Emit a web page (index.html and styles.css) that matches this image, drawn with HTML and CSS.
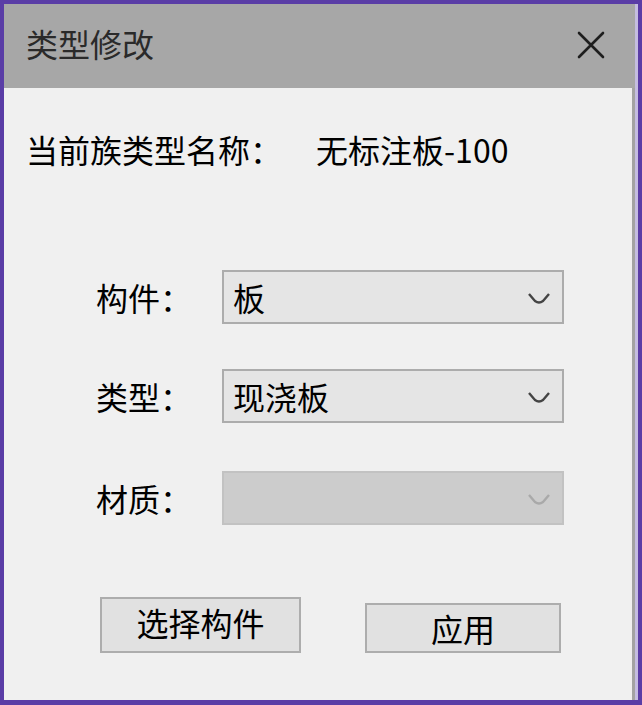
FILE: index.html
```html
<!DOCTYPE html>
<html lang="zh-CN">
<head>
<meta charset="utf-8">
<title>类型修改</title>
<link rel="stylesheet" href="styles.css">
</head>
<body>
<div class="window">
  <div class="titlebar">
    <span class="title">类型修改</span>
    <span class="close" aria-label="关闭">
      <svg width="28" height="28" viewBox="0 0 28 28"><path d="M2 2 L26 26 M26 2 L2 26" stroke="#1e1e1e" stroke-width="2.6" stroke-linecap="round" fill="none"/></svg>
    </span>
  </div>
  <div class="content">
    <div class="info">
      <span class="info-label">当前族类型名称：</span>
      <span class="info-value">无标注板-100</span>
    </div>
    <div class="form-row row-1">
      <span class="label">构件：</span>
      <div class="combo">
        <span class="combo-text">板</span>
        <svg class="chev" width="24" height="14" viewBox="0 0 24 14"><path d="M2 3 L8 10 Q12 13 16 10 L22 3" stroke="#444" stroke-width="2.4" fill="none" stroke-linejoin="round"/></svg>
      </div>
    </div>
    <div class="form-row row-2">
      <span class="label">类型：</span>
      <div class="combo">
        <span class="combo-text">现浇板</span>
        <svg class="chev" width="24" height="14" viewBox="0 0 24 14"><path d="M2 3 L8 10 Q12 13 16 10 L22 3" stroke="#444" stroke-width="2.4" fill="none" stroke-linejoin="round"/></svg>
      </div>
    </div>
    <div class="form-row row-3">
      <span class="label">材质：</span>
      <div class="combo disabled">
        <span class="combo-text"></span>
        <svg class="chev" width="24" height="14" viewBox="0 0 24 14"><path d="M2 3 L8 10 Q12 13 16 10 L22 3" stroke="#a9a9a9" stroke-width="2.4" fill="none" stroke-linejoin="round"/></svg>
      </div>
    </div>
    <div class="buttons">
      <button class="btn btn-select">选择构件</button>
      <button class="btn btn-apply">应用</button>
    </div>
  </div>
</div>
</body>
</html>
```

FILE: styles.css
```css
html, body {
  margin: 0;
  padding: 0;
}
body {
  width: 642px;
  height: 705px;
  background: #5a3da6;
  overflow: hidden;
  font-family: "Noto Sans CJK SC", "Noto Sans", sans-serif;
}
.window {
  margin: 4px 0 0 4px;
  width: 631px;
  height: 696px;
  border-right: 3px solid #c4bde0;
  display: flex;
  flex-direction: column;
}
.titlebar {
  height: 84px;
  background: #a7a7a7;
  display: flex;
  align-items: center;
  justify-content: space-between;
  padding: 0 30px 0 22px;
}
.title {
  font-size: 32px;
  line-height: 40px;
  color: #2a2a2a;
  margin-top: -6px;
}
.close {
  display: flex;
  margin-top: -3px;
}
.content {
  flex: 1;
  background: #f0f0f0;
  border-right: 3px solid #a3a3a3;
  display: flex;
  flex-direction: column;
  padding-left: 22px;
  color: #000;
}
.info {
  margin-top: 41px;
  height: 40px;
  display: flex;
  align-items: center;
  font-size: 32px;
  line-height: 40px;
}
.info-value {
  margin-left: 34px;
}
.form-row {
  display: flex;
  align-items: center;
}
.row-1 { margin-top: 101px; }
.row-2 { margin-top: 45px; }
.row-3 { margin-top: 48px; }
.label {
  width: 126px;
  padding-left: 70px;
  font-size: 32px;
  line-height: 40px;
}
.combo {
  box-sizing: border-box;
  width: 342px;
  height: 54px;
  background: #e5e5e5;
  border: 2px solid #acacac;
  display: flex;
  align-items: center;
  justify-content: space-between;
  padding: 0 11px 0 9px;
}
.combo.disabled {
  background: #cccccc;
  border-color: #c2c2c2;
}
.combo-text {
  font-size: 32px;
  line-height: 40px;
}
.chev {
  margin-top: 2px;
}
.buttons {
  margin-top: 72px;
  display: flex;
  align-items: flex-end;
  padding-left: 74px;
  gap: 64px;
}
.btn {
  box-sizing: border-box;
  background: #e1e1e1;
  border: 2px solid #adadad;
  font-family: "Noto Sans CJK SC", "Noto Sans", sans-serif;
  font-size: 32px;
  line-height: 40px;
  color: #000;
  padding: 0;
  margin: 0;
  display: flex;
  align-items: center;
  justify-content: center;
}
.btn-select {
  width: 201px;
  height: 56px;
  padding-bottom: 6px;
}
.btn-apply {
  width: 196px;
  height: 50px;
}
```
